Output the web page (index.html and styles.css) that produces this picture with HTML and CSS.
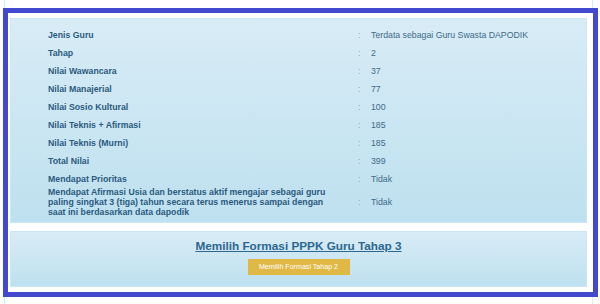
FILE: index.html
```html
<!DOCTYPE html>
<html lang="id">
<head>
<meta charset="utf-8">
<title>Formasi PPPK</title>
<link rel="stylesheet" href="styles.css">
</head>
<body>
<div class="frame">
  <div class="panel info">
    <div class="row"><div class="label">Jenis Guru</div><div class="colon">:</div><div class="value">Terdata sebagai Guru Swasta DAPODIK</div></div>
    <div class="row"><div class="label">Tahap</div><div class="colon">:</div><div class="value">2</div></div>
    <div class="row"><div class="label">Nilai Wawancara</div><div class="colon">:</div><div class="value">37</div></div>
    <div class="row"><div class="label">Nilai Manajerial</div><div class="colon">:</div><div class="value">77</div></div>
    <div class="row"><div class="label">Nilai Sosio Kultural</div><div class="colon">:</div><div class="value">100</div></div>
    <div class="row"><div class="label">Nilai Teknis + Afirmasi</div><div class="colon">:</div><div class="value">185</div></div>
    <div class="row"><div class="label">Nilai Teknis (Murni)</div><div class="colon">:</div><div class="value">185</div></div>
    <div class="row"><div class="label">Total Nilai</div><div class="colon">:</div><div class="value">399</div></div>
    <div class="row"><div class="label">Mendapat Prioritas</div><div class="colon">:</div><div class="value">Tidak</div></div>
    <div class="row multi"><div class="label">Mendapat Afirmasi Usia dan berstatus aktif mengajar sebagai guru paling singkat 3 (tiga) tahun secara terus menerus sampai dengan saat ini berdasarkan data dapodik</div><div class="colon">:</div><div class="value">Tidak</div></div>
  </div>
  <div class="panel action">
    <a class="heading" href="#">Memilih Formasi PPPK Guru Tahap 3</a>
    <button class="btn" type="button">Memilih Formasi Tahap 2</button>
  </div>
</div>
</body>
</html>
```
FILE: styles.css
```css
html, body {
  margin: 0;
  padding: 0;
}
body {
  width: 600px;
  height: 304px;
  overflow: hidden;
  background:
    linear-gradient(#cfeef7, #cfeef7) 4px 0 / 1px 100% no-repeat,
    linear-gradient(#cfeef7, #cfeef7) 592px 0 / 1px 100% no-repeat,
    #ffffff;
  font-family: "Liberation Sans", Arial, sans-serif;
}
.frame {
  box-sizing: border-box;
  width: 595px;
  height: 289px;
  margin: 8px 0 0 3px;
  border: 5px solid #4349cf;
  padding: 5px 6px 5px 2px;
  background: #ffffff;
  display: flex;
  flex-direction: column;
  gap: 8px;
}
.panel {
  box-sizing: border-box;
  border: 1px solid #c9e8f3;
  background: linear-gradient(#d8ecf6, #bee0ef);
}
.info {
  height: 205px;
  padding: 7px 10px 0 37px;
}
.row {
  display: grid;
  grid-template-columns: 310px 13px 1fr;
  align-items: center;
  font-size: 8.75px;
  line-height: 18px;
}
.row.multi {
  line-height: 9.8px;
}
.label {
  font-weight: bold;
  color: #2b5b7e;
  padding-right: 24px;
}
.colon {
  color: #8aa6ba;
}
.value {
  color: #3f6a88;
}
.action {
  height: 56px;
  padding-top: 7px;
  display: flex;
  flex-direction: column;
  align-items: center;
}
.heading {
  font-size: 11.75px;
  line-height: 14px;
  font-weight: bold;
  color: #2c6790;
  text-decoration: underline;
}
.btn {
  margin-top: 6px;
  width: 102px;
  height: 16px;
  padding: 0;
  border: none;
  background: #e0b846;
  color: #ffffff;
  font-family: "Liberation Sans", Arial, sans-serif;
  font-size: 7.1px;
  line-height: 16px;
}
```
